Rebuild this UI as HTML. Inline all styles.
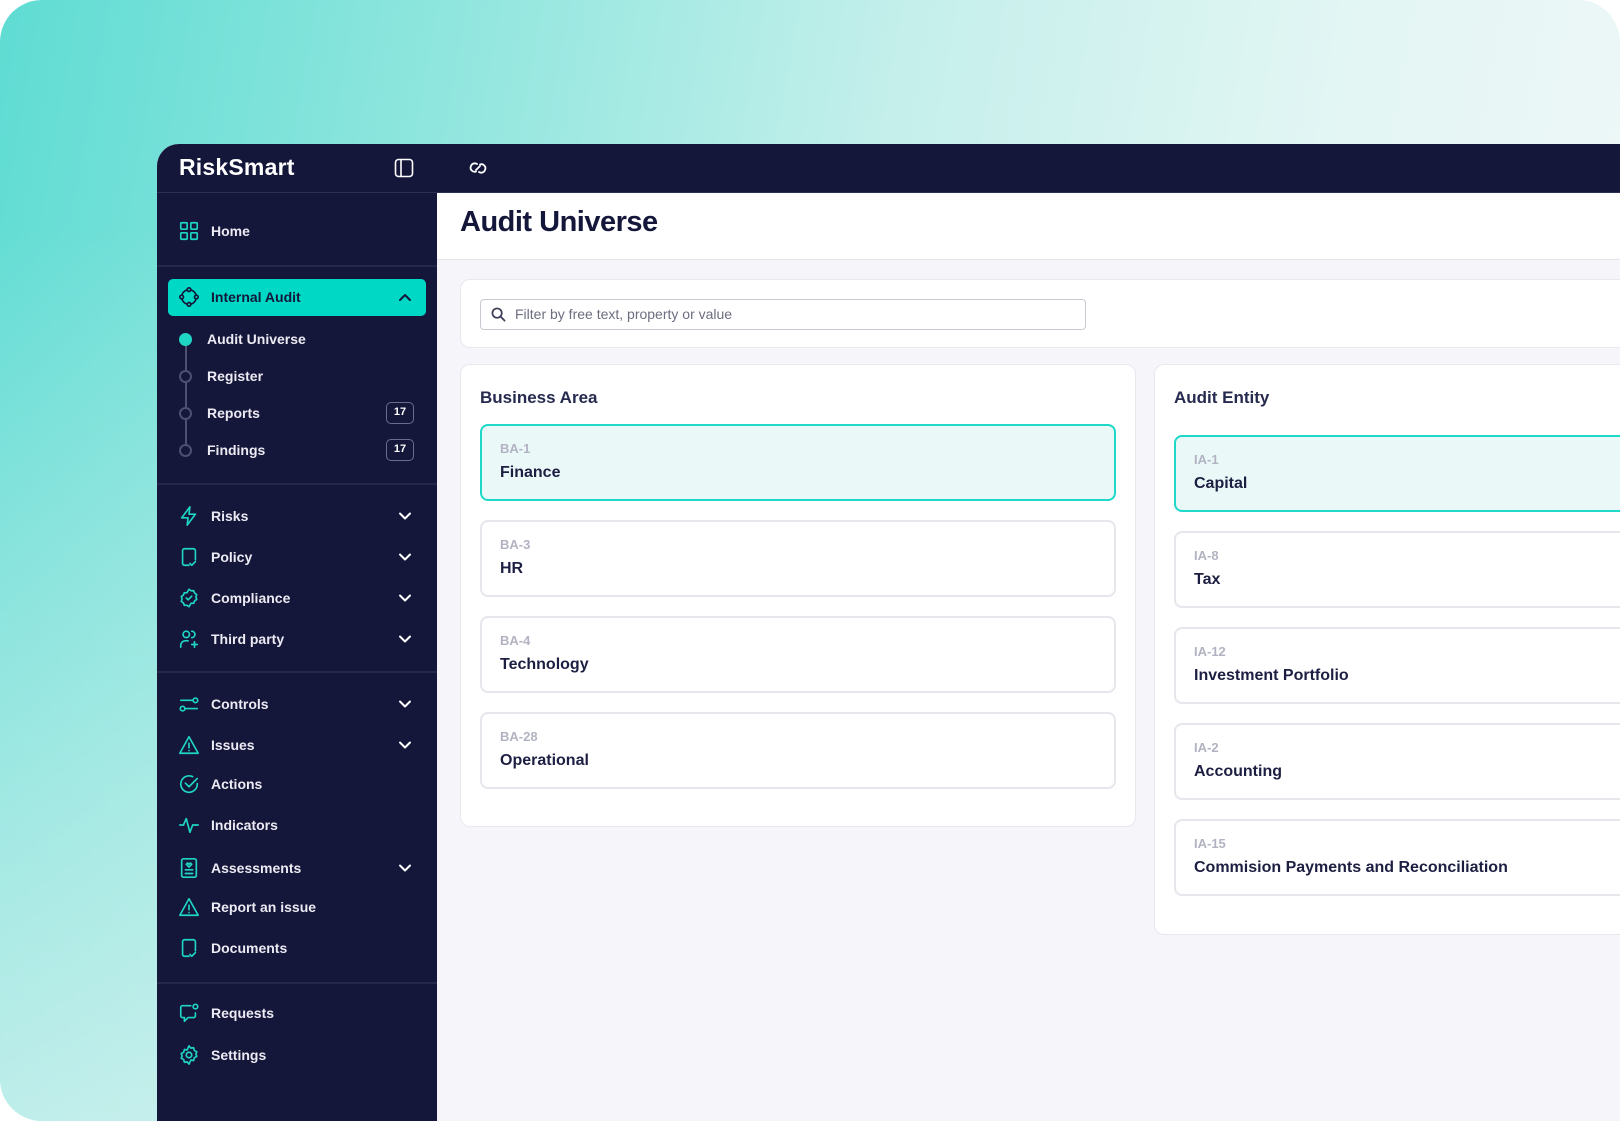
<!DOCTYPE html>
<html><head><meta charset="utf-8"><style>
*{box-sizing:border-box;margin:0;padding:0}
html,body{width:1620px;height:1121px;overflow:hidden;background:#fff}
body{font-family:"Liberation Sans",sans-serif;position:relative}
.bg{position:absolute;left:0;top:0;width:1620px;height:1121px;border-radius:42px;overflow:hidden;
background:linear-gradient(100deg,#5fdcd3 0%,#8fe6de 25%,#c4efeb 50%,#e3f6f4 75%,#f1f8f8 100%)}
.bg:after{content:"";position:absolute;left:0;top:0;right:0;bottom:0;background:linear-gradient(180deg,rgba(255,255,255,0) 20%,rgba(240,246,246,.6) 100%)}
.app{position:absolute;left:157px;top:144px;width:1463px;height:977px;border-top-left-radius:22px;overflow:hidden;background:#f5f5fa;z-index:2}
.top{position:absolute;left:0;top:0;right:0;height:49px;background:#14163a;border-bottom:1px solid #2c2f55}
.side{position:absolute;left:0;top:49px;width:280px;bottom:0;background:#14163a}
.logo{position:absolute;left:22px;top:10px;color:#fff;font-weight:700;font-size:23px;letter-spacing:.2px}
.hr{position:absolute;left:0;width:280px;height:2px;background:#25284c}
.it{position:absolute;left:21px;height:24px;display:flex;align-items:center;color:#eceaf2;font-size:14px;font-weight:700}
.it svg{width:22px;height:22px;margin-right:11px;fill:none;stroke:#1fd5c4;stroke-width:1.8;stroke-linecap:round;stroke-linejoin:round}
.chev{position:absolute;left:241px;width:14px;height:14px}
.chev svg{width:14px;height:14px;fill:none;stroke:#fff;stroke-width:2;stroke-linecap:round;stroke-linejoin:round}
.ia{position:absolute;left:11px;top:86px;width:258px;height:37px;background:#00d8c6;border-radius:5px;color:#14163a;font-size:14px;font-weight:700}
.sub{position:absolute;left:50px;color:#eceaf2;font-size:14px;font-weight:700;line-height:16px}
.dot{position:absolute;left:22px;width:13px;height:13px;border-radius:50%;border:2px solid #4d5070;background:#14163a}
.badge{position:absolute;left:229px;width:28px;height:22px;border:1.5px solid #6a6d8a;border-radius:5px;color:#fff;font-size:11px;text-align:center;line-height:19px;font-weight:700}
.main{position:absolute;left:280px;top:49px;right:0;bottom:0}
.head{position:absolute;left:0;top:0;right:0;height:67px;background:#fff;border-bottom:1px solid #e4e4ea}
.title{position:absolute;left:23px;top:13px;font-size:29px;font-weight:700;color:#14163a;letter-spacing:-.5px}
.panel{position:absolute;background:#fff;border:1px solid #e8e8ee;border-radius:10px}
.search{position:absolute;left:19px;top:19px;width:606px;height:31px;border:1.5px solid #c9c9d2;border-radius:4px;font-size:14px;color:#6c6e80;padding:6px 0 0 34px}
.ptitle{position:absolute;left:19px;top:23px;font-size:17px;font-weight:700;color:#262a4e}
.card{position:absolute;left:19px;width:636px;height:77px;border:2px solid #e6e6ec;border-radius:8px;background:#fff}
.card.sel{border-color:#1ed9c8;background:#eaf8f8}
.code{position:absolute;left:18px;top:15px;font-size:13px;color:#b2b3c2;font-weight:700}
.nm{position:absolute;left:18px;top:38px;font-size:16px;color:#1d1f42;font-weight:700}
</style></head><body>
<div class="bg"></div>
<div class="app">
 <div class="top">
  <div class="logo">RiskSmart</div>
  <svg style="position:absolute;left:237px;top:14px" width="20" height="20" viewBox="0 0 20 20" fill="none" stroke="#fff" stroke-width="1.6"><rect x="1.5" y="1.5" width="17" height="17" rx="3"/><line x1="7" y1="2" x2="7" y2="18"/></svg>
  <svg style="position:absolute;left:310px;top:14px" width="22" height="20" viewBox="0 0 22 20" fill="none" stroke="#fff" stroke-width="1.8" stroke-linecap="round"><path d="M9 13.5a4 4 0 0 1-5-5.5 4 4 0 0 1 6-2"/><path d="M13 6.5a4 4 0 0 1 5 5.5 4 4 0 0 1-6 2"/><path d="M9 12 13 8"/></svg>
 </div>
 <div class="side">
  <div class="it" style="top:26px"><svg viewBox="0 0 24 24"><rect x="3" y="3" width="7" height="7" rx="1"/><rect x="14" y="3" width="7" height="7" rx="1"/><rect x="3" y="14" width="7" height="7" rx="1"/><rect x="14" y="14" width="7" height="7" rx="1"/></svg>Home</div>
  <div class="hr" style="top:72px"></div>
  <div class="ia"><div class="it" style="left:10px;top:6px;color:#14163a"><svg viewBox="0 0 24 24" style="stroke:#14163a"><circle cx="12" cy="12" r="8"/><circle cx="12" cy="4" r="2" fill="#00d8c6"/><circle cx="12" cy="20" r="2" fill="#00d8c6"/><circle cx="4" cy="12" r="2" fill="#00d8c6"/><circle cx="20" cy="12" r="2" fill="#00d8c6"/></svg>Internal Audit</div>
   <div class="chev" style="left:230px;top:11px"><svg viewBox="0 0 14 14" style="stroke:#14163a"><path d="M2 10 7 5l5 5"/></svg></div></div>
  <div style="position:absolute;left:28px;top:146px;width:2px;height:111px;background:#4d5070"></div>
  <div class="dot" style="top:140px;background:#1fd5c4;border-color:#1fd5c4"></div><div class="sub" style="top:138px">Audit Universe</div>
  <div class="dot" style="top:177px"></div><div class="sub" style="top:175px">Register</div>
  <div class="dot" style="top:214px"></div><div class="sub" style="top:212px">Reports</div><div class="badge" style="top:209px">17</div>
  <div class="dot" style="top:251px"></div><div class="sub" style="top:249px">Findings</div><div class="badge" style="top:246px">17</div>
  <div class="hr" style="top:290px"></div>
  <div class="it" style="top:311px"><svg viewBox="0 0 24 24"><path d="M13 2 4 14h7l-1 8 9-12h-7z"/></svg>Risks</div><div class="chev" style="top:316px"><svg viewBox="0 0 14 14"><path d="M2 4.5l5 5 5-5"/></svg></div>
  <div class="it" style="top:352px"><svg viewBox="0 0 24 24"><path d="M12 21H7a2 2 0 0 1-2-2V5a2 2 0 0 1 2-2h10a2 2 0 0 1 2 2v10"/><path d="M13 19l2 2 4-4"/></svg>Policy</div><div class="chev" style="top:357px"><svg viewBox="0 0 14 14"><path d="M2 4.5l5 5 5-5"/></svg></div>
  <div class="it" style="top:393px"><svg viewBox="0 0 24 24"><path d="M12 2.5l2.3 1.6 2.8-.1 1 2.6 2.3 1.6-.8 2.7.8 2.7-2.3 1.6-1 2.6-2.8-.1L12 21.5l-2.3-1.6-2.8.1-1-2.6-2.3-1.6.8-2.7-.8-2.7 2.3-1.6 1-2.6 2.8.1z"/><path d="M9 12l2 2 4-4"/></svg>Compliance</div><div class="chev" style="top:398px"><svg viewBox="0 0 14 14"><path d="M2 4.5l5 5 5-5"/></svg></div>
  <div class="it" style="top:434px"><svg viewBox="0 0 24 24"><circle cx="9" cy="7" r="3.5"/><path d="M15 3.5a3.5 3.5 0 0 1 0 7"/><path d="M3 21v-2a5 5 0 0 1 5-5h3"/><path d="M18 15v6M15 18h6"/></svg>Third party</div><div class="chev" style="top:439px"><svg viewBox="0 0 14 14"><path d="M2 4.5l5 5 5-5"/></svg></div>
  <div class="hr" style="top:478px"></div>
  <div class="it" style="top:499px"><svg viewBox="0 0 24 24"><path d="M3 8h13M8 17h13"/><circle cx="19" cy="8" r="2.5"/><circle cx="5" cy="17" r="2.5"/></svg>Controls</div><div class="chev" style="top:504px"><svg viewBox="0 0 14 14"><path d="M2 4.5l5 5 5-5"/></svg></div>
  <div class="it" style="top:540px"><svg viewBox="0 0 24 24"><path d="M12 3 2 21h20z"/><path d="M12 10v5M12 18v.1"/></svg>Issues</div><div class="chev" style="top:545px"><svg viewBox="0 0 14 14"><path d="M2 4.5l5 5 5-5"/></svg></div>
  <div class="it" style="top:579px"><svg viewBox="0 0 24 24"><path d="M21 11.5A9 9 0 1 1 16 4"/><path d="M8 11l4 4 9-9"/></svg>Actions</div>
  <div class="it" style="top:620px"><svg viewBox="0 0 24 24"><path d="M2 12h4l3-7 4 15 3-8h6"/></svg>Indicators</div>
  <div class="it" style="top:663px"><svg viewBox="0 0 24 24"><rect x="4" y="2" width="16" height="20" rx="2"/><path d="M12 11l-3-3 1.5-1.5L12 8l1.5-1.5L15 8z"/><path d="M8 14h8M8 18h8"/></svg>Assessments</div><div class="chev" style="top:668px"><svg viewBox="0 0 14 14"><path d="M2 4.5l5 5 5-5"/></svg></div>
  <div class="it" style="top:702px"><svg viewBox="0 0 24 24"><path d="M12 3 2 21h20z"/><path d="M12 10v5M12 18v.1"/></svg>Report an issue</div>
  <div class="it" style="top:743px"><svg viewBox="0 0 24 24"><path d="M12 21H7a2 2 0 0 1-2-2V5a2 2 0 0 1 2-2h10a2 2 0 0 1 2 2v10"/><path d="M13 19l2 2 4-4"/></svg>Documents</div>
  <div class="hr" style="top:789px"></div>
  <div class="it" style="top:808px"><svg viewBox="0 0 24 24"><path d="M14 4H5a2 2 0 0 0-2 2v9a2 2 0 0 0 2 2h2v4l4-4h6a2 2 0 0 0 2-2v-3"/><circle cx="19" cy="5" r="2.5"/></svg>Requests</div>
  <div class="it" style="top:850px"><svg viewBox="0 0 24 24"><circle cx="12" cy="12" r="3"/><path d="M12 2l2 2.5 3-.5.8 3 2.7 1.5-1 2.5 1 2.5-2.7 1.5-.8 3-3-.5L12 22l-2-2.5-3 .5-.8-3L3.5 15.5l1-2.5-1-2.5L6.2 9 7 6l3 .5z"/></svg>Settings</div>
 </div>
 <div class="main">
  <div class="head"><div class="title">Audit Universe</div></div>
  <div class="panel" style="left:23px;top:86px;width:1200px;height:69px">
   <div class="search">Filter by free text, property or value
    <svg style="position:absolute;left:10px;top:7px" width="15" height="15" viewBox="0 0 16 16" fill="none" stroke="#3a3c55" stroke-width="1.8" stroke-linecap="round"><circle cx="6.5" cy="6.5" r="5"/><path d="M10.5 10.5 14.5 14.5"/></svg></div>
  </div>
  <div class="panel" style="left:23px;top:171px;width:676px;height:463px">
   <div class="ptitle">Business Area</div>
   <div class="card sel" style="top:59px"><div class="code">BA-1</div><div class="nm">Finance</div></div>
   <div class="card" style="top:155px"><div class="code">BA-3</div><div class="nm">HR</div></div>
   <div class="card" style="top:251px"><div class="code">BA-4</div><div class="nm">Technology</div></div>
   <div class="card" style="top:347px"><div class="code">BA-28</div><div class="nm">Operational</div></div>
  </div>
  <div class="panel" style="left:717px;top:171px;width:700px;height:571px">
   <div class="ptitle">Audit Entity</div>
   <div class="card sel" style="top:70px;width:680px"><div class="code">IA-1</div><div class="nm">Capital</div></div>
   <div class="card" style="top:166px;width:680px"><div class="code">IA-8</div><div class="nm">Tax</div></div>
   <div class="card" style="top:262px;width:680px"><div class="code">IA-12</div><div class="nm">Investment Portfolio</div></div>
   <div class="card" style="top:358px;width:680px"><div class="code">IA-2</div><div class="nm">Accounting</div></div>
   <div class="card" style="top:454px;width:680px"><div class="code">IA-15</div><div class="nm">Commision Payments and Reconciliation</div></div>
  </div>
 </div>
</div>
</body></html>
